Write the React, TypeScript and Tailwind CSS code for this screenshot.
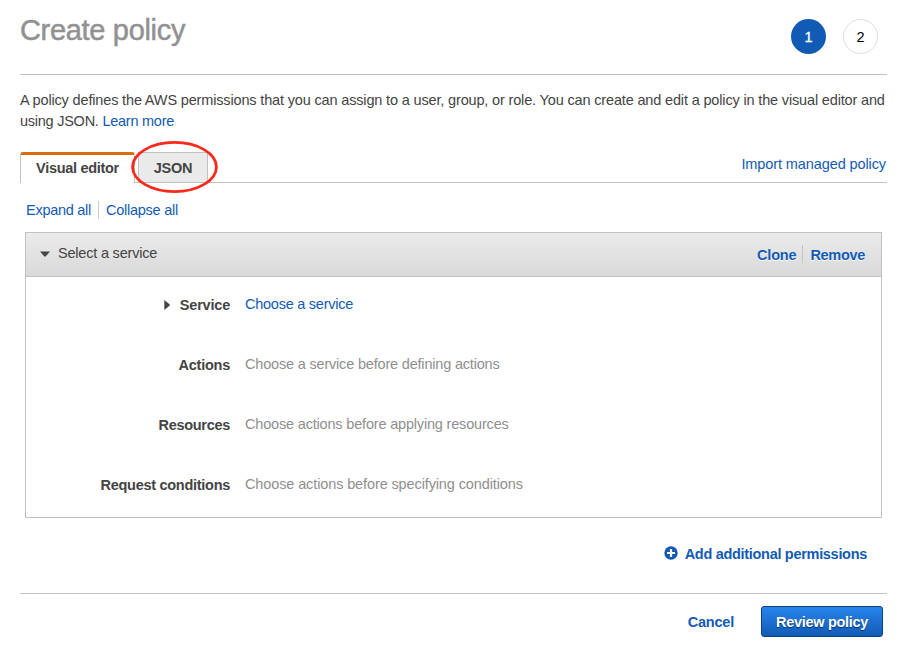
import React from "react";

const rows = [
  { label: "Service", text: "Choose a service", link: true, labelTrack: "tracking-[-0.2px]", track: "tracking-[-0.25px]" },
  { label: "Actions", text: "Choose a service before defining actions", link: false, labelTrack: "tracking-[-0.25px]", track: "tracking-[-0.185px]" },
  { label: "Resources", text: "Choose actions before applying resources", link: false, labelTrack: "tracking-[-0.3px]", track: "tracking-[-0.18px]" },
  { label: "Request conditions", text: "Choose actions before specifying conditions", link: false, labelTrack: "tracking-[-0.28px]", track: "tracking-[-0.12px]" },
];

export default function App() {
  return (
    <div className="h-[651px] w-[905px] overflow-hidden bg-white pl-5 pr-[18px] font-['Liberation_Sans',Arial,sans-serif] text-[14.5px] leading-[21px] text-[#444] whitespace-nowrap">
      <header className="flex h-[75px] items-start justify-between border-b border-[#c1c1c1] pr-[9px]">
        <h1 className="pt-[13px] text-[29px] leading-[34px] text-[#919191]">
          <span className="tracking-[-0.32px] [-webkit-text-stroke:0.5px_#919191]">Create policy</span>
        </h1>
        <div className="flex gap-[17px] pt-[19px]">
          <span className="flex size-[35px] items-center justify-center rounded-full bg-[#125bb5] pt-px text-white [-webkit-text-stroke:0.3px_#fff]">1</span>
          <span className="flex size-[35px] items-center justify-center rounded-full border border-[#ddd] pt-px text-black">2</span>
        </div>
      </header>

      <p className="h-[77px] pt-[15px]">
        <span className="tracking-[-0.157px]">A policy defines the AWS permissions that you can assign to a user, group, or role. You can create and edit a policy in the visual editor and</span>
        <br />
        <span className="tracking-[-0.25px]">using JSON. </span>
        <a className="tracking-[-0.25px] text-[#125bb5]">Learn more</a>
      </p>

      <nav className="flex h-[31px] border-b border-[#c1c1c1] font-bold">
        <div className="h-[31px] w-[115px] rounded-t-[3px] border-x border-t-3 border-x-[#c1c1c1] border-t-[#dd6b10] bg-white pt-[3px] text-center">
          <span className="tracking-[-0.3px]">Visual editor</span>
        </div>
        <div className="relative ml-[3px] h-[30px] w-[70px] border border-b-0 border-[#c1c1c1] bg-[#eaeaea] pt-[5px] text-center">
          <span className="tracking-[-0.3px]">JSON</span>
          <svg className="absolute -left-[8px] -top-[13px]" width="90" height="56" viewBox="0 0 90 56" fill="none">
            <ellipse cx="43.5" cy="27" rx="41.9" ry="24.6" stroke="#f9281a" strokeWidth="2.8" />
          </svg>
        </div>
        <a className="-mr-px ml-auto pr-[2px] pt-[2px] font-normal tracking-[-0.1px] text-[#125bb5]">Import managed policy</a>
      </nav>

      <div className="flex h-[49px] pl-[6px] pt-[17px] text-[#125bb5]">
        <a className="w-[72px] tracking-[-0.27px]">Expand all</a>
        <span className="mt-[1px] h-[18px] border-l border-[#ccc]" />
        <a className="ml-[7px] tracking-[-0.25px]">Collapse all</a>
      </div>

      <section className="ml-[5px] h-[286px] w-[857px] border border-[#c1c1c1]">
        <div className="flex h-[44px] border-b border-[#c1c1c1] bg-linear-to-b from-[#ebebeb] to-[#d9d9d9] pl-[14px] pr-4">
          <svg className="mt-[18px]" width="10" height="6" viewBox="0 0 10 6" fill="#444"><path d="M0 0.5h10L5.8 5.3Q5 6 4.2 5.3Z" /></svg>
          <span className="ml-[8px] mt-[10px] tracking-[-0.2px]">Select a service</span>
          <div className="ml-auto mt-[12px] flex font-bold text-[#125bb5] [text-shadow:0_1px_0_#fff]">
            <a className="tracking-[-0.2px]">Clone</a>
            <span className="ml-[6px] h-[18px] border-l border-[#c4c4c4]" />
            <a className="ml-[7px] tracking-[-0.3px]">Remove</a>
          </div>
        </div>
        <div className="pt-[17px]">
          {rows.map((r) => (
            <div key={r.label} className="flex h-[60px]">
              <div className="flex w-[204px] justify-end pt-[1px] font-bold">
                {r.link && <svg className="mr-[10px] mt-[5px]" width="6" height="10" viewBox="0 0 6 10" fill="#444"><path d="M0.3 0L5.5 4.3Q6 5 5.5 5.7L0.3 10Z" /></svg>}
                <span className={r.labelTrack}>{r.label}</span>
              </div>
              <div className={`ml-[15px] ${r.link ? "text-[#125bb5]" : "text-[#8f8f8f]"} ${r.track}`}>{r.text}</div>
            </div>
          ))}
        </div>
      </section>

      <div className="flex h-[76px] justify-end border-b border-[#c1c1c1] pr-5 pt-[26px] font-bold text-[#125bb5]">
        <svg className="mr-[7px] mt-[2px]" width="14" height="14" viewBox="0 0 14 14">
          <circle cx="7" cy="7" r="6.7" fill="#125bb5" />
          <path d="M7 3v8M3 7h8" stroke="#fff" strokeWidth="2.2" />
        </svg>
        <a className="tracking-[-0.3px]">Add additional permissions</a>
      </div>

      <footer className="flex justify-end pr-1 pt-3 font-bold">
        <a className="mr-[27px] pt-[6px] tracking-[-0.2px] text-[#125bb5]">Cancel</a>
        <button className="h-[31px] w-[122px] rounded-[3px] border border-[#0b4085] bg-linear-to-b from-[#2785ee] to-[#125bb5] pt-[1px] tracking-[-0.3px] text-white [text-shadow:0_1px_1px_#083368]">
          Review policy
        </button>
      </footer>
    </div>
  );
}
